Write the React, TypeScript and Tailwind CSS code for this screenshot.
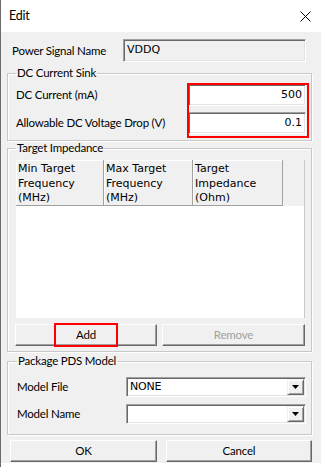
const ui = "font-['Lato','Noto_Sans',sans-serif]";
const tah = "font-['DejaVu_Sans',sans-serif]";

function Sunken({ className = "", children }: { className?: string; children?: React.ReactNode }) {
  return (
    <div
      className={`border border-t-[#a0a0a0] border-l-[#a0a0a0] border-b-white border-r-white shadow-[inset_1px_1px_0_#696969,inset_-1px_-1px_0_#e3e3e3] ${className}`}
    >
      {children}
    </div>
  );
}

function Btn({ label, disabled, className = "" }: { label: string; disabled?: boolean; className?: string }) {
  return (
    <div
      className={`h-[22px] flex items-center justify-center bg-[#f0f0f0] border border-t-white border-l-white border-b-[#696969] border-r-[#696969] shadow-[inset_-1px_-1px_0_#a0a0a0] ${
        disabled ? "text-[#a0a0a0]" : "text-black"
      } ${className}`}
    >
      {label}
    </div>
  );
}

function Combo({ value }: { value: string }) {
  return (
    <Sunken className="w-[180px] h-[20px] bg-white flex items-stretch">
      <div className={`flex-1 flex items-center pl-[3px] text-[11px] ${tah}`}>{value}</div>
      <div className="w-[17px] my-[1px] mr-[1px] bg-[#f0f0f0] border border-t-[#f0f0f0] border-l-[#f0f0f0] border-b-[#696969] border-r-[#696969] shadow-[inset_1px_1px_0_#fff,inset_-1px_-1px_0_#a0a0a0] flex items-center justify-center">
        <svg width="7" height="4" viewBox="0 0 7 4">
          <path d="M0 0h7L3.5 4z" fill="#000" />
        </svg>
      </div>
    </Sunken>
  );
}

function Group({ title, className = "", children }: { title: string; className?: string; children: React.ReactNode }) {
  return (
    <fieldset className={`w-[305px] border border-[#c8c8c8] shadow-[1px_1px_0_#fff,inset_1px_1px_0_#fff] ${className}`}>
      <legend className="px-[1px] leading-[14px]">{title}</legend>
      {children}
    </fieldset>
  );
}

export default function App() {
  return (
    <div className={`w-[321px] h-[467px] bg-white border-l border-[#6b6b6b] text-[11.5px] tracking-[-0.2px] text-black ${ui}`}>
      <div className="h-[32px] flex items-center justify-between pl-[8px] pr-[10px]">
        <span className="text-[12.5px]">Edit</span>
        <svg width="11" height="11" viewBox="0 0 11 11">
          <path d="M0.5 0.5L10.5 10.5M10.5 0.5L0.5 10.5" stroke="#000" strokeWidth="1" />
        </svg>
      </div>

      <div className="h-[431px] bg-[#f0f0f0] pl-[6px] flex flex-col">
        <div className="mt-[7px] ml-[5px] flex items-center h-[23px]">
          <span className="w-[111px]">Power Signal Name</span>
          <Sunken className={`w-[183px] h-[23px] bg-[#f0f0f0] flex items-center pl-[3px] text-[11px] tracking-normal ${tah}`}>VDDQ</Sunken>
        </div>

        <Group title="DC Current Sink" className="mt-[4px] pt-[4px] pb-[6px] pl-[8px] pr-[5px]">
          <div className="flex justify-between">
            <div className="flex flex-col gap-[6px]">
              <div className="h-[22px] flex items-center">DC Current (mA)</div>
              <div className="h-[22px] flex items-center">Allowable DC Voltage Drop (V)</div>
            </div>
            <div className="relative flex flex-col gap-[6px] w-[118px]">
              <Sunken className={`h-[22px] bg-white flex items-center justify-end pr-[3px] text-[11px] tracking-normal ${tah}`}>500</Sunken>
              <Sunken className={`h-[22px] bg-white flex items-center justify-end pr-[3px] text-[11px] tracking-normal ${tah}`}>0.1</Sunken>
              <div className="absolute -left-[1px] -top-[1px] -right-[3px] -bottom-[4px] border-2 border-[#ff0000] pointer-events-none" />
            </div>
          </div>
        </Group>

        <Group title="Target Impedance" className="pt-[5px] pb-[5px] pl-[8px] pr-[5px]">
          <div className="w-[289px] bg-white border-r border-[#c8c8c8]">
            <div className={`flex h-[46px] bg-[#f0f0f0] text-[11px] leading-[14.5px] tracking-normal ${tah}`}>
              <div className="w-[88px] pl-[2px] pt-[2px] border-r border-b border-[#a0a0a0] shadow-[inset_1px_1px_0_#fff]">
                Min Target<br />Frequency<br />(MHz)
              </div>
              <div className="w-[89px] pl-[2px] pt-[2px] border-r border-b border-[#a0a0a0] shadow-[inset_1px_1px_0_#fff]">
                Max Target<br />Frequency<br />(MHz)
              </div>
              <div className="w-[90px] pl-[2px] pt-[2px] border-r border-b border-[#a0a0a0] shadow-[inset_1px_1px_0_#fff]">
                Target<br />Impedance<br />(Ohm)
              </div>
              <div className="flex-1" />
            </div>
            <div className="h-[112px]" />
          </div>
          <div className="mt-[6px] flex gap-[5px] -ml-[1px]">
            <div className="relative">
              <Btn label="Add" className="w-[142px]" />
              <div className="absolute left-[39px] -top-[1px] w-[64px] h-[24px] border-2 border-[#ff0000] pointer-events-none" />
            </div>
            <Btn label="Remove" disabled className="w-[143px]" />
          </div>
        </Group>

        <Group title="Package PDS Model" className="mt-[2px] pt-[9px] pb-[10px] pl-[9px] pr-[5px]">
          <div className="flex flex-col gap-[7px]">
            <div className="flex items-center justify-between">
              <span>Model File</span>
              <Combo value="NONE" />
            </div>
            <div className="flex items-center justify-between">
              <span>Model Name</span>
              <Combo value="" />
            </div>
          </div>
        </Group>

        <div className="mt-[5px] ml-[3px] flex gap-[9px]">
          <Btn label="OK" className="w-[147px]" />
          <Btn label="Cancel" className="w-[146px]" />
        </div>
      </div>
    </div>
  );
}
